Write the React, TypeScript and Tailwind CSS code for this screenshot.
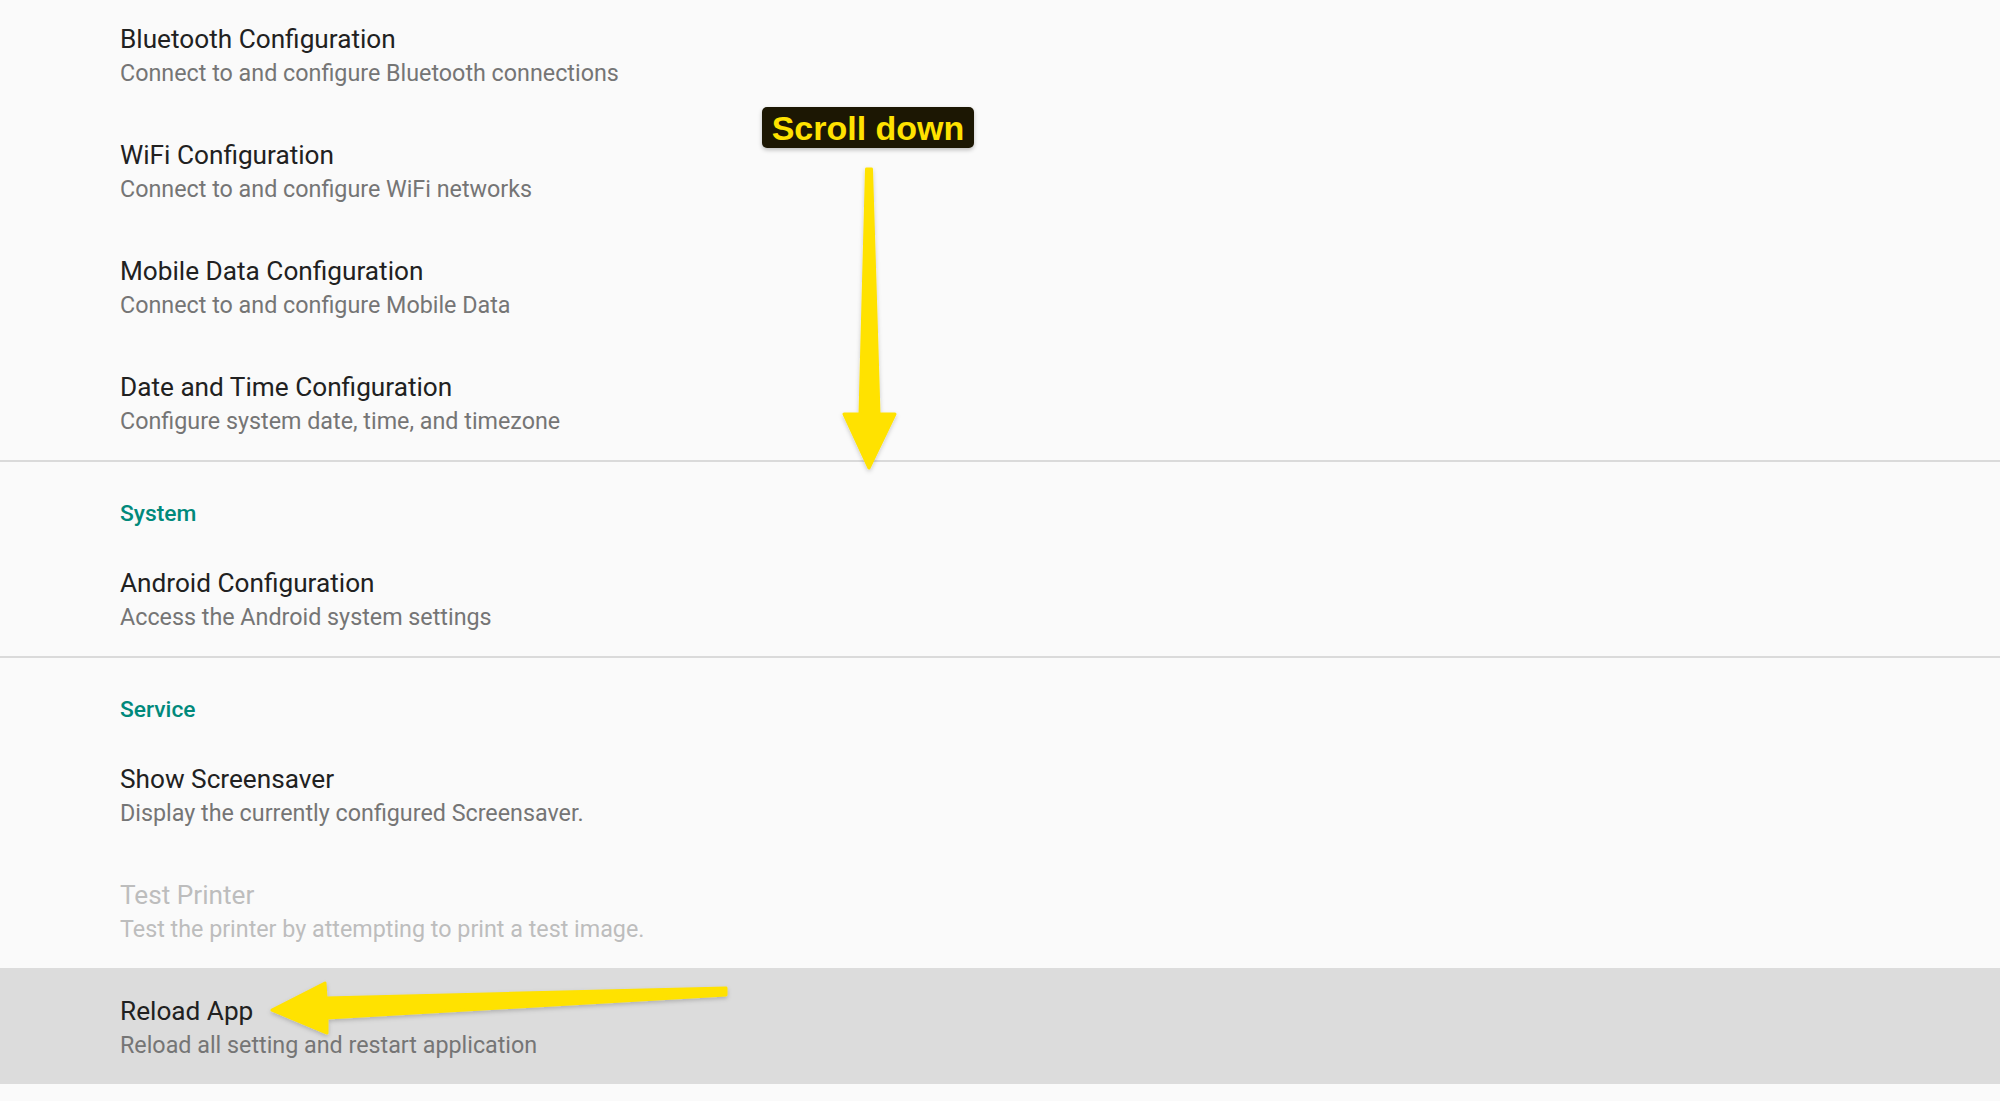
import React from 'react';

type Row = { title: string; subtitle: string; disabled?: boolean; active?: boolean };

const network: Row[] = [
  { title: 'Bluetooth Configuration', subtitle: 'Connect to and configure Bluetooth connections' },
  { title: 'WiFi Configuration', subtitle: 'Connect to and configure WiFi networks' },
  { title: 'Mobile Data Configuration', subtitle: 'Connect to and configure Mobile Data' },
  { title: 'Date and Time Configuration', subtitle: 'Configure system date, time, and timezone' },
];

const system: Row[] = [
  { title: 'Android Configuration', subtitle: 'Access the Android system settings' },
];

const service: Row[] = [
  { title: 'Show Screensaver', subtitle: 'Display the currently configured Screensaver.' },
  { title: 'Test Printer', subtitle: 'Test the printer by attempting to print a test image.', disabled: true },
  { title: 'Reload App', subtitle: 'Reload all setting and restart application', active: true },
];

function PrefRow({ row }: { row: Row }) {
  return (
    <div className={`h-[116px] pl-[120px] pt-[25px] ${row.active ? 'bg-[#dcdcdc]' : ''}`}>
      <div className={`text-[26.2px] leading-[36px] ${row.disabled ? 'text-[#bdbdbd]' : 'text-[#212121]'}`}>
        {row.title}
      </div>
      <div className={`mt-[1px] text-[23.3px] leading-[30px] ${row.disabled ? 'text-[#bdbdbd]' : 'text-[#757575]'}`}>
        {row.subtitle}
      </div>
    </div>
  );
}

function Category({ label }: { label: string }) {
  return (
    <div className="h-[78px] pl-[120px] pt-[37px]">
      <div className="text-[22.8px] leading-[30px] font-medium text-[#00897b]">{label}</div>
    </div>
  );
}

export default function App() {
  return (
    <div
      className="relative h-[1101px] w-full overflow-hidden bg-[#fafafa]"
      style={{ fontFamily: 'Roboto, "Noto Sans", sans-serif' }}
    >
      <div className="-mt-[4px] flex flex-col">
        {network.map((r) => (
          <PrefRow key={r.title} row={r} />
        ))}
        <div className="h-[2px] bg-[#dadada]" />
        <Category label="System" />
        {system.map((r) => (
          <PrefRow key={r.title} row={r} />
        ))}
        <div className="h-[2px] bg-[#dadada]" />
        <Category label="Service" />
        {service.map((r) => (
          <PrefRow key={r.title} row={r} />
        ))}
      </div>

      {/* annotation overlay */}
      <div
        className="absolute left-[762px] top-[107px] flex h-[41px] w-[212px] items-center justify-center rounded-[5px] bg-[#1c1703] shadow-[0_2px_4px_rgba(0,0,0,0.25)]"
        style={{ fontFamily: '"Liberation Sans", Arial, sans-serif' }}
      >
        <span className="text-[34px] font-bold leading-none text-[#ffe200]">Scroll down</span>
      </div>

      <svg className="pointer-events-none absolute left-0 top-0" width="2000" height="1101">
        <defs>
          <filter id="sh" x="-20%" y="-20%" width="140%" height="140%">
            <feDropShadow dx="0" dy="2" stdDeviation="2" floodColor="#000" floodOpacity="0.2" />
          </filter>
        </defs>
        <g filter="url(#sh)" fill="#ffe200" stroke="#ffe200" strokeWidth="3" strokeLinejoin="round">
          <path d="M866.5 169 L871.5 169 L879 414 L895 414 L869 468 L844 414 L860 414 Z" />
          <path d="M272 1010 L325 983 L326 998 L726 988 L726 995 L327 1018 L327 1033 Z" />
        </g>
      </svg>
    </div>
  );
}
